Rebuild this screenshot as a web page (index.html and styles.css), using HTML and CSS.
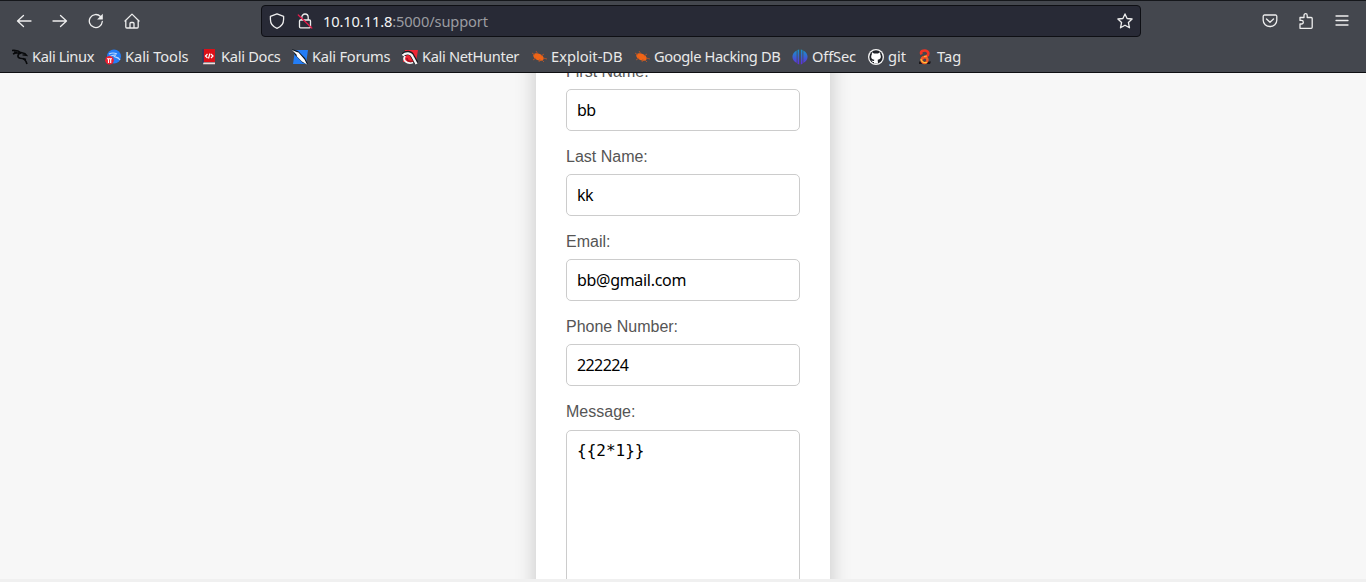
FILE: index.html
```html
<!DOCTYPE html>
<html lang="en">
<head>
<meta charset="utf-8">
<title>Support</title>
<link rel="stylesheet" href="styles.css">
</head>
<body>
<div class="window">
  <header class="chrome">
    <div class="toolbar">
      <div class="nav">
        <svg class="icon" viewBox="0 0 16 16"><path d="M15 8H1.500M7.500 2.500L1.500 8l6 5.500"/></svg>
        <svg class="icon" viewBox="0 0 16 16"><path d="M1 8h13.500M8.500 2.500l6 5.500-6 5.500"/></svg>
        <svg class="icon" viewBox="0 0 16 16"><path d="M14.300 8.500A6.500 6.500 0 1 1 12.500 3.500"/><path class="solid" d="M14.800 .8v5.700H9.100z"/></svg>
        <svg class="icon" viewBox="0 0 16 16"><path d="M1 8l7-6.900L15 8M1.800 7.300V14a1 1 0 0 0 1 1h10.400a1 1 0 0 0 1-1V7.300M6 15v-4.500a1 1 0 0 1 1-1h2a1 1 0 0 1 1 1V15"/></svg>
      </div>
      <div class="urlbar">
        <svg class="icon" viewBox="0 0 16 16"><path d="M8 .8l6.600 2.500v3C14.600 10.800 11.800 14 8 15.300 4.200 14 1.400 10.800 1.400 6.300v-3z"/></svg>
        <svg class="icon lock" viewBox="0 0 16 16"><path d="M4.800 7V4.200a3.200 3.200 0 0 1 6.400 0V7M3.500 7h9a1 1 0 0 1 1 1v5.800a1 1 0 0 1-1 1h-9a1 1 0 0 1-1-1V8a1 1 0 0 1 1-1z"/><path class="slash" d="M1.300 2l13.500 13"/></svg>
        <span class="url"><b>10.10.11.8</b>:5000/support</span>
        <svg class="icon star" viewBox="0 0 16 16"><path d="M8 .9l2.100 4.600 5 .5-3.700 3.500 1.100 5.300L8 12.200l-4.500 2.600 1.100-5.300L.9 6l5-.5z"/></svg>
      </div>
      <div class="actions">
        <svg class="icon" viewBox="0 0 16 16"><path d="M2.500 2h11a1.300 1.300 0 0 1 1.300 1.300v4a6.800 6.200 0 0 1-13.600 0v-4A1.300 1.300 0 0 1 2.500 2zM4.500 6L8 9.300 11.500 6"/></svg>
        <svg class="icon" viewBox="0 0 16 16"><path d="M2 15.300V11h1.500a1.800 1.800 0 0 0 0-3.600H2V4.500h4V2.500a1.600 1.800 0 0 1 3.200 0v2h4a1 1 0 0 1 1 1v8.800a1 1 0 0 1-1 1z"/></svg>
        <svg class="icon" viewBox="0 0 16 16"><path d="M2 3h12M2 7.500h12M2 12h12"/></svg>
      </div>
    </div>
    <nav class="bookmarks">
      <a class="bookmark w1"><svg class="fav" viewBox="0 0 16 16"><g fill="none" stroke="#08090b"><path stroke-width="1.600" d="M0 1.500c4-.5 7 .5 9.500 2.500M1 5c3-1.500 6-1.500 8.500-1M9 4C5 5 5 9 8.500 9.300c3 .1 5 .7 6.500 5.700"/><path stroke-width="1.400" d="M9 3.500l4 1 1.500 1.800-4-.4M2 3l3 .5M11 9.500l3 1"/></g></svg><span>Kali Linux</span></a>
      <a class="bookmark w2"><svg class="fav" viewBox="0 0 16 16"><circle cx="9" cy="7.500" r="7" fill="#247cf5"/><path fill="none" stroke="#b9d8ff" stroke-width="1.200" d="M4 5c4-2 6-1 8 0M5 7.500c3-2 4-1.500 6-1.300M9 7c0 2 4 0 6 4"/><circle cx="4.500" cy="11.300" r="4.300" fill="#ed1f30"/><path fill="none" stroke="#fff" stroke-width="1.100" d="M2 9.800h5M3.500 10v4M5.700 10v4"/></svg><span>Kali Tools</span></a>
      <a class="bookmark w3"><svg class="fav" viewBox="0 0 16 16"><path fill="#dc1018" d="M2 0h12v13H2z"/><path fill="#223769" d="M1.500 0h1.300v14H1.500z"/><path fill="#f1dddd" d="M2.500 13.500H14v1.800H2z"/><path fill="none" stroke="#fff" stroke-width="1.200" d="M6.500 5l-2 2 2 2M10 5l2 2-2 2M8.900 4.500l-1.400 5"/></svg><span>Kali Docs</span></a>
      <a class="bookmark w4"><svg class="fav" viewBox="0 0 16 16"><path fill="#237df5" d="M3 1h13l-2 14H1z"/><path fill="#101820" d="M0 0l6 2 7 7 3 6-5-1-8-8z"/><path fill="#fff" d="M0 1l4.500 2 2 .5 6 7 2.500 5-5-3-5-5-.5-2z"/></svg><span>Kali Forums</span></a>
      <a class="bookmark w5"><svg class="fav" viewBox="0 0 16 16"><path fill="#ef2634" d="M3 1h13l-2 12H1z"/><path fill="none" stroke="#17191e" stroke-width="4.200" d="M1 6c3-3 8-3 9.500 1l4 7"/><path fill="none" stroke="#f7f7f7" stroke-width="2.300" d="M.5 6.500C4 3 9 4 10.500 7.500l4 7.500"/><path fill="none" stroke="#f7f7f7" stroke-width="1.800" d="M3.200 7C0 11 5 15.500 11 13.500"/><path fill="none" stroke="#a31321" stroke-width="1.500" d="M5 9c-.5 3 3 4 6 3"/></svg><span>Kali NetHunter</span></a>
      <a class="bookmark w6"><svg class="fav" viewBox="0 0 16 16"><ellipse cx="7.500" cy="8" rx="5.600" ry="3.200" transform="rotate(24 7.500 8)" fill="#ef6416"/><path stroke="#b75528" stroke-width=".9" d="M4 6L1 4M5 9l-3 2M7 5L5 2M9 10l-1 3M10 7l3-2M12 9l4 1M11 11l2 2"/></svg><span>Exploit-DB</span></a>
      <a class="bookmark w7"><svg class="fav" viewBox="0 0 16 16"><ellipse cx="7.500" cy="8" rx="5.600" ry="3.200" transform="rotate(24 7.500 8)" fill="#ef6416"/><path stroke="#b75528" stroke-width=".9" d="M4 6L1 4M5 9l-3 2M7 5L5 2M9 10l-1 3M10 7l3-2M12 9l4 1M11 11l2 2"/></svg><span>Google Hacking DB</span></a>
      <a class="bookmark w8"><svg class="fav" viewBox="0 0 16 16"><defs><linearGradient id="g" x2="0" y2="1"><stop stop-color="#1596c8"/><stop offset="1" stop-color="#622bdc"/></linearGradient></defs><path fill="url(#g)" d="M7.200 .5v15l-1.700-.7V1zM4.700 1.500v12.500C-1 11.500-1 4 4.700 1.500zM8.800 .5v15l1.700-.7V1zM11.300 1.500v12.500c5.700-2.500 5.700-10 0-12.500z"/></svg><span>OffSec</span></a>
      <a class="bookmark w9"><svg class="fav" viewBox="0 0 16 16"><circle cx="8" cy="8" r="8" fill="#f5f5f5"/><circle cx="8" cy="8" r="6.700" fill="#202329"/><path fill="#fff" d="M4 3.200l2 1.200h4l2-1.200.3 2.300c1.500 3-.2 5-2.600 5.300l.3 3.700H6v-1.600c-1.500.2-2-.7-2.600-1.500 1 0 1.300 1 2.600.6l.3-1.200C3.800 10.500 2.300 8.500 3.800 5.500z"/></svg><span>git</span></a>
      <a class="bookmark w10"><svg class="fav" viewBox="0 0 16 16"><path fill="#1c1a1d" d="M2 12.500h12l-1 2.500H2z"/><path fill="none" stroke="#f13424" stroke-width="2.700" d="M4.500 5.500C3 2 6 1.500 8 1.500s4.500 2 3 4.500-5 1-6 4.500"/><circle cx="7.500" cy="11" r="3" fill="none" stroke="#f35a27" stroke-width="2.400"/><path fill="none" stroke="#ffc43a" stroke-width="1.200" d="M7 7.500l3-.5M4 10c0 3 3 4 6 3.500"/></svg><span>Tag</span></a>
    </nav>
  </header>
  <main class="page">
    <form class="card">
      <div class="field"><label>First Name:</label><div class="input">bb</div></div>
      <div class="field"><label>Last Name:</label><div class="input">kk</div></div>
      <div class="field"><label>Email:</label><div class="input email">bb@gmail.com</div></div>
      <div class="field"><label>Phone Number:</label><div class="input phone">222224</div></div>
      <div class="field message"><label>Message:</label><div class="input area">{{2*1}}</div></div>
    </form>
  </main>
  <footer class="edge"></footer>
</div>
</body>
</html>
```
FILE: styles.css
```css
* { box-sizing: border-box; }
body { margin: 0; }
.window { width: 1366px; height: 582px; display: flex; flex-direction: column; overflow: hidden; }
.chrome {
  height: 73px; flex: none; background: #44474e; color: #e9e9e9;
  border-top: 1px solid #15171b; border-bottom: 1px solid #0e0f12;
  font-family: "Noto Sans", sans-serif;
}
.toolbar { height: 40px; display: flex; align-items: center; }
.nav { width: 261px; padding-left: 16px; display: flex; gap: 20px; }
.icon { width: 16px; height: 16px; flex: none; fill: none; stroke: #eee; stroke-width: 1.3; stroke-linejoin: round; stroke-linecap: round; }
.icon .solid { fill: #eee; stroke: none; }
.icon .slash { stroke: #e51b4b; }
.urlbar {
  width: 880px; height: 32px; padding: 0 7px; display: flex; align-items: center;
  background: #282a36; border: 1px solid #0e0f14; border-radius: 4px;
}
.lock { margin-left: 12px; }
.url { margin-left: 10px; font-size: 14.67px; letter-spacing: -.12px; line-height: 20px; padding-bottom: 1px; color: #9b9ca1; white-space: nowrap; }
.url b { font-weight: 400; color: #f5f5f5; }
.star { margin-left: auto; }
.actions { margin-left: auto; padding-right: 16px; display: flex; gap: 20px; }
.bookmarks { height: 31px; padding-left: 12px; display: flex; align-items: center; font-size: 14.67px; }
.bookmark { display: flex; flex: none; align-items: center; gap: 4px; white-space: nowrap; }
.bookmark span { line-height: 20px; padding-bottom: 2px; }
.fav { width: 16px; height: 16px; flex: none; }
.w1 { width: 93px; letter-spacing: -.4px; }
.w2 { width: 96px; letter-spacing: -.08px; }
.w3 { width: 91px; letter-spacing: -.3px; }
.w4 { width: 110px; letter-spacing: -.25px; }
.w5 { width: 129px; letter-spacing: -.35px; }
.w6 { width: 103px; }
.w7 { width: 158px; letter-spacing: -.4px; }
.w8 { width: 76px; letter-spacing: -.15px; }
.w9 { width: 49px; }
.page { height: 506px; flex: none; overflow: hidden; display: flex; justify-content: center; background: #f7f7f7; }
.card {
  width: 294px; height: 700px; flex: none; margin-top: -38px; padding: 28px 30px 0;
  background: #fff; box-shadow: 0 0 20px rgba(0, 0, 0, .2);
}
.field { margin-bottom: 17px; }
.field label { display: block; height: 18px; font: 16px/18px "Liberation Sans", Arial, sans-serif; color: #555; }
.input {
  height: 42px; margin-top: 8px; padding: 0 10px; border: 1px solid #ccc; border-radius: 5px;
  font: 16px/40px "Noto Sans", sans-serif; letter-spacing: -.5px; color: #000; background: #fff;
}
.email { letter-spacing: -.3px; }
.phone { letter-spacing: -.6px; }
.message .input { margin-top: 9px; }
.input.area { height: 200px; font: 16px/40px "DejaVu Sans Mono", monospace; letter-spacing: 0; }
.edge { flex: 1; background: #f0f0f0; }
```
